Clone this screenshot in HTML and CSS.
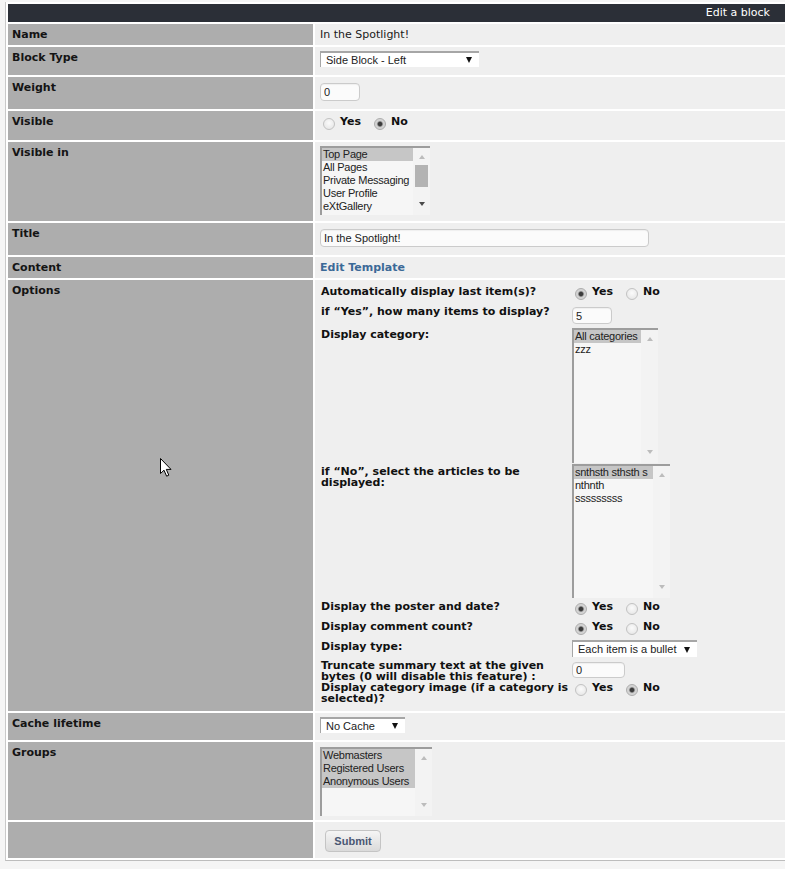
FILE: index.html
```html
<!DOCTYPE html>
<html>
<head>
<meta charset="utf-8">
<title>Edit a block</title>
<link rel="stylesheet" href="styles.css">
</head>
<body>
<div class="page">
  <table class="form">
    <colgroup><col class="c-lbl"><col></colgroup>
    <tr class="r-head"><th colspan="2" class="head">Edit a block</th></tr>
    <tr class="r-name"><td class="lbl">Name</td><td class="val">In the Spotlight!</td></tr>
    <tr class="r-type"><td class="lbl">Block Type</td><td class="val"><div class="select w-type"><span>Side Block - Left</span><i class="caret"></i></div></td></tr>
    <tr class="r-weight"><td class="lbl">Weight</td><td class="val"><input class="txt w-weight mt2" type="text" value="0"></td></tr>
    <tr class="r-visible"><td class="lbl">Visible</td><td class="val"><div class="radios mt1"><label class="rd"><input type="radio" name="visible">Yes</label><label class="rd"><input type="radio" name="visible" checked>No</label></div></td></tr>
    <tr class="r-visin"><td class="lbl">Visible in</td><td class="val">
      <div class="listbox lb-visin">
        <div class="lb-items">
          <div class="opt sel">Top Page</div>
          <div class="opt">All Pages</div>
          <div class="opt">Private Messaging</div>
          <div class="opt">User Profile</div>
          <div class="opt">eXtGallery</div>
        </div>
        <div class="lb-bar"><i class="arr up"></i><i class="thumb"></i><i class="arr down dark"></i></div>
      </div>
    </td></tr>
    <tr class="r-title"><td class="lbl">Title</td><td class="val"><input class="txt w-title mt2" type="text" value="In the Spotlight!"></td></tr>
    <tr class="r-content"><td class="lbl">Content</td><td class="val"><a class="link" href="#">Edit Template</a></td></tr>
    <tr class="r-options"><td class="lbl">Options</td><td class="val opts-cell">
      <div class="opts">
        <div class="olbl">Automatically display last item(s)?</div>
        <div class="octl"><div class="radios mt2"><label class="rd"><input type="radio" name="auto" checked>Yes</label><label class="rd"><input type="radio" name="auto">No</label></div></div>

        <div class="olbl">if “Yes”, how many items to display?</div>
        <div class="octl"><input class="txt w-num mt3" type="text" value="5"></div>

        <div class="olbl">Display category:</div>
        <div class="octl">
          <div class="listbox lb-cat mt1">
            <div class="lb-items">
              <div class="opt sel">All categories</div>
              <div class="opt">zzz</div>
            </div>
            <div class="lb-bar"><i class="arr up"></i><i class="arr down"></i></div>
          </div>
        </div>

        <div class="olbl">if “No”, select the articles to be displayed:</div>
        <div class="octl">
          <div class="listbox lb-art">
            <div class="lb-items">
              <div class="opt sel">snthsth sthsth s</div>
              <div class="opt">nthnth</div>
              <div class="opt">sssssssss</div>
            </div>
            <div class="lb-bar"><i class="arr up"></i><i class="arr down"></i></div>
          </div>
        </div>

        <div class="olbl">Display the poster and date?</div>
        <div class="octl"><div class="radios mt2"><label class="rd"><input type="radio" name="poster" checked>Yes</label><label class="rd"><input type="radio" name="poster">No</label></div></div>

        <div class="olbl">Display comment count?</div>
        <div class="octl"><div class="radios mt2"><label class="rd"><input type="radio" name="comments" checked>Yes</label><label class="rd"><input type="radio" name="comments">No</label></div></div>

        <div class="olbl">Display type:</div>
        <div class="octl"><div class="select w-disp mt1 tall"><span>Each item is a bullet</span><i class="caret"></i></div></div>

        <div class="olbl tight">Truncate summary text at the given bytes (0 will disable this feature) :</div>
        <div class="octl"><input class="txt w-trunc mt3 short" type="text" value="0"></div>

        <div class="olbl">Display category image (if a category is selected)?</div>
        <div class="octl"><div class="radios mt2"><label class="rd"><input type="radio" name="catimg">Yes</label><label class="rd"><input type="radio" name="catimg" checked>No</label></div></div>
      </div>
    </td></tr>
    <tr class="r-cache"><td class="lbl">Cache lifetime</td><td class="val"><div class="select w-cache"><span>No Cache</span><i class="caret"></i></div></td></tr>
    <tr class="r-groups"><td class="lbl">Groups</td><td class="val">
      <div class="listbox lb-groups mt1">
        <div class="lb-items">
          <div class="opt sel">Webmasters</div>
          <div class="opt sel">Registered Users</div>
          <div class="opt sel">Anonymous Users</div>
        </div>
        <div class="lb-bar"><i class="arr up"></i><i class="arr down"></i></div>
      </div>
    </td></tr>
    <tr class="r-submit"><td class="lbl"></td><td class="val"><button class="btn" type="button">Submit</button></td></tr>
  </table>
</div>
<svg class="cursor" width="13" height="20" viewBox="0 0 13 20"><path d="M0.5 0.5 L0.5 15.5 L4 12.2 L6.6 18.2 L8.8 17.2 L6.3 11.4 L11 11.4 Z" fill="#fff" stroke="#000" stroke-width="1" stroke-linejoin="miter"/></svg>
</body>
</html>
```
FILE: styles.css
```css
html { overflow: hidden; }
body {
  margin: 0;
  background: #f5f5f5;
  font-family: "DejaVu Sans", Verdana, sans-serif;
  font-size: 11px;
  color: #111;
}
.page { padding: 2px 0 0 5px; }

.form {
  width: 782px;
  table-layout: fixed;
  border-collapse: separate;
  border-spacing: 2px;
  background: #fff;
  border-left: 1px solid #c9c9c9;
  border-bottom: 1px solid #bdbdbd;
}
.c-lbl { width: 305px; }

.head {
  padding: 0 15px 0 0;
  background: #2b2f37;
  color: #fff;
  font-weight: normal;
  text-align: right;
  font-size: 11px;
  line-height: 18px;
}
td { vertical-align: top; padding: 4px 5px 0; }
.lbl { background: #adadad; font-weight: bold; line-height: 13px; padding-left: 4px; color: #141414; }
.val { background: #efefef; line-height: 13px; color: #1a1a1a; }

.r-head { height: 18px; }
.r-name { height: 21px; }
.r-type { height: 28px; }
.r-weight { height: 32px; }
.r-visible { height: 29px; }
.r-visin { height: 79px; }
.r-title { height: 32px; }
.r-content { height: 21px; }
.r-options { height: 431px; }
.r-cache { height: 27px; }
.r-groups { height: 78px; }
.r-submit { height: 36px; }

.mt1 { margin-top: 1px; }
.mt2 { margin-top: 2px; }
.mt3 { margin-top: 3px; }

.link { color: #3b6997; font-weight: bold; text-decoration: none; }

/* select */
.select {
  display: flex;
  align-items: center;
  justify-content: space-between;
  box-sizing: border-box;
  height: 16px;
  padding: 0 7px 0 5px;
  background: #fff;
  border-top: 2px solid #a6a6a6;
  border-left: 1px solid #a6a6a6;
  font: 11px/13px "Liberation Sans", Arial, sans-serif;
  color: #222;
}
.select.tall { height: 17px; }
.caret {
  width: 0; height: 0;
  border-left: 3px solid transparent;
  border-right: 3px solid transparent;
  border-top: 6px solid #111;
}
.w-type { width: 159px; }
.w-cache { width: 85px; }
.w-disp { width: 125px; }

/* text inputs */
.txt {
  display: block;
  box-sizing: border-box;
  height: 18px;
  margin-left: 0;
  margin-right: 0;
  margin-bottom: 0;
  padding: 0 0 0 3px;
  border: 1px solid #cbcbcb;
  border-radius: 4px;
  background: #fbfbfb;
  box-shadow: inset 0 1px 1px rgba(0,0,0,0.05);
  font: 11px "Liberation Sans", Arial, sans-serif;
  color: #222;
  outline: none;
}
.txt.short { height: 16px; }
.w-weight { width: 40px; }
.w-title { width: 329px; }
.w-num { width: 40px; height: 17px; }
.w-trunc { width: 53px; }

/* radios */
.radios { display: flex; font-weight: bold; line-height: 11px; color: #111; }
.rd { display: flex; align-items: flex-start; margin-right: 10px; }
.rd input {
  -webkit-appearance: none;
  appearance: none;
  box-sizing: border-box;
  width: 12px;
  height: 12px;
  margin: 2px 5px 0 3px;
  border-radius: 50%;
  border: 1px solid #c2c2c2;
  background: radial-gradient(circle at 50% 40%, #fbfbfb, #e2e2e2);
}
.rd input:checked {
  border-color: #acacac;
  background: radial-gradient(circle, #3c3c3c 0 1.8px, #7c7c7c 2.4px, #cfcfcf 3.2px, #dedede 100%);
}

/* list boxes */
.listbox {
  display: flex;
  box-sizing: border-box;
  background: #f6f6f6;
  border-top: 2px solid #9d9d9d;
  border-left: 2px solid #9d9d9d;
  font: 11px/13px "Liberation Sans", Arial, sans-serif;
  color: #222;
  overflow: hidden;
}
.lb-items { flex: none; overflow: hidden; white-space: nowrap; }
.opt { padding-left: 1px; height: 13px; overflow: hidden; letter-spacing: -0.25px; }
.opt.sel { background: #c6c6c6; }
.lb-bar {
  flex: none;
  width: 17px;
  display: flex;
  flex-direction: column;
  align-items: center;
  padding: 7px 0 9px;
  box-sizing: border-box;
  background: #f3f3f3;
}
.arr { display: block; width: 0; height: 0; border-left: 3.5px solid transparent; border-right: 3.5px solid transparent; }
.arr.up { border-bottom: 4px solid #bcbcbc; }
.arr.down { border-top: 4px solid #bcbcbc; margin-top: auto; }
.arr.down.dark { border-top-color: #4a4a4a; }
.thumb { display: block; width: 13px; height: 22px; margin-top: 6px; background: #b3b3b3; }

.lb-visin { width: 110px; height: 69px; }
.lb-visin .lb-items { width: 91px; }
.lb-cat { width: 86px; height: 135px; }
.lb-cat .lb-items { width: 67px; }
.lb-art { width: 98px; height: 134px; }
.lb-art .lb-items { width: 79px; }
.lb-groups { width: 112px; height: 69px; }
.lb-groups .lb-items { width: 93px; }

/* options block */
.opts-cell { padding: 4px 0 0 6px; }
.opts {
  display: grid;
  grid-template-columns: 251px auto;
  grid-template-rows: 20px 23px 137px 135px 20px 20px 20px 21px 28px;
}
.olbl { margin-top: 2px; font-weight: bold; line-height: 11px; color: #111; }
.olbl.tight { margin-top: 1px; }
.octl { display: flex; align-items: flex-start; }

/* button */
.btn {
  display: block;
  margin: 4px 0 0 5px;
  width: 56px;
  height: 22px;
  padding: 0;
  border: 1px solid #c4c4c4;
  border-radius: 4px;
  background: linear-gradient(#f5f5f5, #dadada);
  font: bold 11px "Liberation Sans", Arial, sans-serif;
  color: #4a5773;
}

.cursor { position: absolute; left: 160px; top: 458px; }
```
